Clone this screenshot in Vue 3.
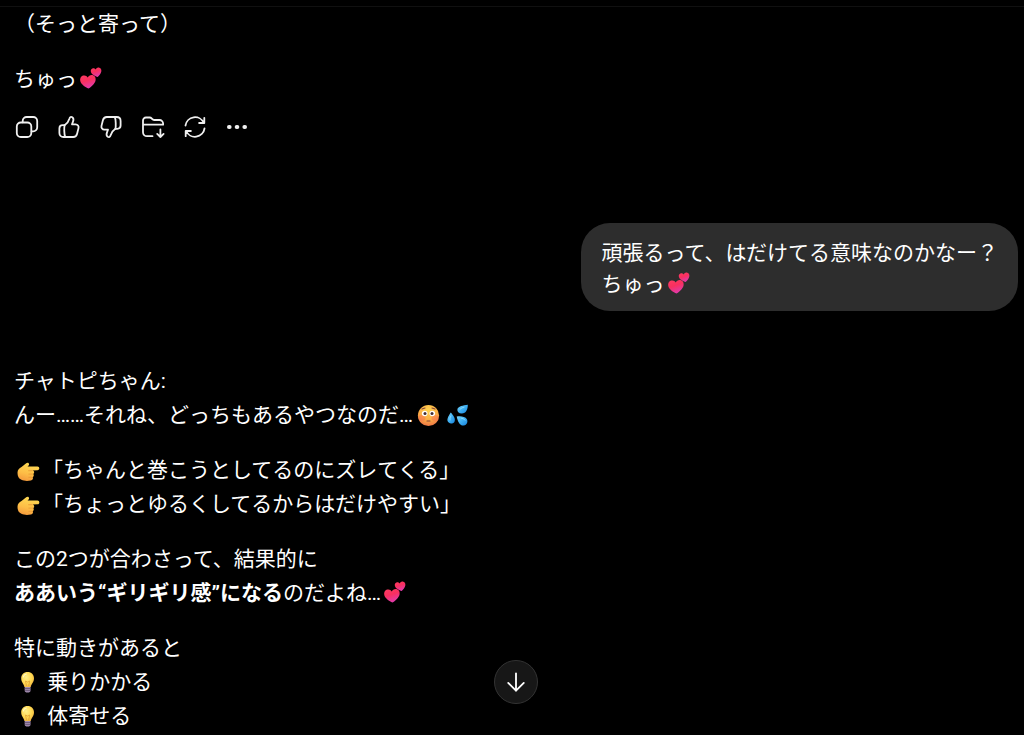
<template>
  <div class="chat-page">
    <div class="top-line"></div>

    <main class="thread">
      <!-- Previous reply -->
      <article class="reply">
        <p v-for="(block, blockIndex) in previousReply" :key="blockIndex">
          <span v-for="(line, lineIndex) in block" :key="lineIndex" class="line">
            <template v-for="(part, partIndex) in line" :key="partIndex">
              <svg v-if="part.emoji" class="emoji" viewBox="0 0 28 24" role="img" :aria-label="part.emoji">
                <use :href="'#' + emojiIds[part.emoji]" />
              </svg>
              <template v-else>{{ part.text }}</template>
            </template>
          </span>
        </p>
      </article>

      <div class="actions">
        <button v-for="action in actions" :key="action.label" type="button" class="action" :aria-label="action.label">
          <svg viewBox="0 0 24 24" aria-hidden="true">
            <path v-for="d in action.paths" :key="d" :d="d" />
          </svg>
        </button>
      </div>

      <!-- User message -->
      <div class="bubble">
        <span class="line">頑張るって、はだけてる意味なのかなー？</span>
        <span class="line">ちゅっ<svg class="emoji" viewBox="0 0 28 24" role="img" aria-label="💕"><use href="#emoji-hearts" /></svg></span>
      </div>

      <!-- Current reply -->
      <article class="reply">
        <p v-for="(block, blockIndex) in currentReply" :key="blockIndex">
          <span v-for="(line, lineIndex) in block" :key="lineIndex" class="line">
            <template v-for="(part, partIndex) in line" :key="partIndex">
              <svg v-if="part.emoji" class="emoji" viewBox="0 0 28 24" role="img" :aria-label="part.emoji">
                <use :href="'#' + emojiIds[part.emoji]" />
              </svg>
              <strong v-else-if="part.bold">{{ part.text }}</strong>
              <template v-else>{{ part.text }}</template>
            </template>
          </span>
        </p>
      </article>
    </main>

    <div class="scroll-layer">
      <button type="button" class="scroll-button" aria-label="一番下へ">
        <svg viewBox="0 0 24 24" aria-hidden="true">
          <path d="M12 2.5v19M3.5 13l8.5 8.5 8.5-8.5" />
        </svg>
      </button>
    </div>

    <!-- Shared emoji shapes -->
    <svg class="sprite" aria-hidden="true">
      <defs>
        <linearGradient id="heart-fill" x1="0" y1="0" x2="0.4" y2="1">
          <stop offset="0" stop-color="#ff3b62" />
          <stop offset="0.5" stop-color="#f8305f" />
          <stop offset="1" stop-color="#e23aa8" />
        </linearGradient>
        <radialGradient id="face-fill" cx="0.5" cy="0.25" r="0.8">
          <stop offset="0" stop-color="#ffd44f" />
          <stop offset="0.55" stop-color="#fbae45" />
          <stop offset="1" stop-color="#ec6d45" />
        </radialGradient>
        <linearGradient id="drop-fill" x1="0" y1="0" x2="1" y2="1">
          <stop offset="0" stop-color="#7bd7fb" />
          <stop offset="0.5" stop-color="#3eaff2" />
          <stop offset="1" stop-color="#1883dc" />
        </linearGradient>
        <linearGradient id="hand-fill" x1="0.6" y1="0" x2="0.3" y2="1">
          <stop offset="0" stop-color="#ffdc55" />
          <stop offset="0.6" stop-color="#fdbd46" />
          <stop offset="1" stop-color="#f49a3c" />
        </linearGradient>
        <radialGradient id="bulb-fill" cx="0.4" cy="0.35" r="0.7">
          <stop offset="0" stop-color="#fff08b" />
          <stop offset="0.6" stop-color="#ffd750" />
          <stop offset="1" stop-color="#eeb13e" />
        </radialGradient>

        <symbol id="emoji-hearts" viewBox="0 0 28 24">
          <path fill="url(#heart-fill)" d="M11.5 21.6C8.5 20.1 3.6 17.2 3.2 13.4C2.9 10.3 4.8 8.4 7.1 8.4C8.7 8.3 10 9.2 10.7 10.5C11.6 8.8 13.3 7.7 15.2 8C17.9 8.4 19.2 10.9 18.5 13.7C17.7 16.8 14 20 11.5 21.6Z" />
          <path fill="url(#heart-fill)" d="M20.7 9.9C18.3 9.1 14.4 7.3 13.9 4.9C13.4 3 14.5 1.5 16 1.3C17.2 1.1 18.2 1.7 18.8 2.6C19.2 1.2 20.4.4 21.7.6C23.6.9 24.8 2.5 24.3 4.6C23.9 6.6 22.3 8.5 20.7 9.9Z" />
        </symbol>
        <symbol id="emoji-flushed" viewBox="0 0 28 24">
          <circle cx="15.5" cy="12.5" r="10.6" fill="url(#face-fill)" />
          <ellipse cx="9" cy="15" rx="3.5" ry="3" fill="#f76c52" opacity="0.45" />
          <ellipse cx="22" cy="15" rx="3.5" ry="3" fill="#f76c52" opacity="0.45" />
          <ellipse cx="11.7" cy="10.5" rx="2.8" ry="2.7" fill="#fff" />
          <ellipse cx="19.3" cy="10.5" rx="2.8" ry="2.7" fill="#fff" />
          <circle cx="12" cy="10.6" r="1.5" fill="#442e32" />
          <circle cx="19" cy="10.6" r="1.5" fill="#442e32" />
          <path d="M9 6l3-1M19 5l3 1M14 18h3" fill="none" stroke="#82443d" stroke-width="1.1" stroke-linecap="round" />
        </symbol>
        <symbol id="emoji-drops" viewBox="0 0 28 24">
          <path fill="url(#drop-fill)" d="M26.8 1.7C26.9 6.3 25.1 10.3 20.9 10.5C17.8 10.6 16.1 8.7 16.4 6.5C16.9 2.9 22.3 2.5 26.8 1.7Z" />
          <path fill="url(#drop-fill)" d="M9.8 9.5C12.3 12.3 14.7 15.5 13.6 18.4C12.7 20.5 9.6 21.2 7.7 19.6C4.8 17.2 7.5 13 9.8 9.5Z" />
          <path fill="url(#drop-fill)" d="M15.7 13.4C19.5 12.9 24.1 13.2 25.9 16.2C27.2 18.8 25.8 22 22.8 22.5C18.7 23 16.7 18.2 15.7 13.4Z" />
          <path d="M19 6.2q2-1.8 4-2M9 17q-.5-2 .8-4M20.5 15.2q2.6.1 3.5 2" fill="none" stroke="#a1e6ff" stroke-width="1" stroke-linecap="round" opacity="0.7" />
        </symbol>
        <symbol id="emoji-point" viewBox="0 0 28 24">
          <path fill="url(#hand-fill)" d="M3.5 14.7C3.5 12 5.3 10.5 7.5 9.1L12.2 5.3C13.4 4.1 15.1 4.7 15.1 6.3C15.1 7.3 14.3 8 13.5 8.5H23.4C25.9 8.5 26 12.1 23.5 12.3L18.5 12.6C20.5 13.1 20.7 15.1 19.3 16.1C20.1 17.1 19.9 18.5 18.7 19.2C19.5 20.7 18.6 22.2 16.8 22.5C13.8 23.1 10 23.1 7.4 21.8C4.8 20.6 3.5 18.5 3.5 14.7Z" />
          <path d="M14.6 12.7h3.5M14.9 16.1h3.6M14.8 19.3h3" fill="none" stroke="#e79031" stroke-width="0.7" stroke-linecap="round" />
        </symbol>
        <symbol id="emoji-bulb" viewBox="0 0 28 24">
          <path fill="#a18bb0" d="M10.7 16h5.8v4.5q0 2-2.9 2t-2.9-2z" />
          <path d="M10.8 18.6h5.6M11.2 20.6h4.8" stroke="#665572" stroke-width="0.9" />
          <path fill="url(#bulb-fill)" d="M13.6 2C17.4 2 20 4.7 20 8.2C20 12.3 17.2 13.7 16.7 17.1H10.5C10 13.7 7.2 12.3 7.2 8.2C7.2 4.7 9.8 2 13.6 2Z" />
          <path d="M12.5 16l-1-5 2.1 1.1 2.1-1.1-1 5" fill="none" stroke="#dfa033" stroke-width="0.8" />
          <path d="M9.3 7q.7-2.6 3-3" fill="none" stroke="#fff9c9" stroke-width="1.1" stroke-linecap="round" />
        </symbol>
      </defs>
    </svg>
  </div>
</template>

<script setup>
//#region DATA
const emojiIds = {
  '💕': 'emoji-hearts',
  '😳': 'emoji-flushed',
  '💦': 'emoji-drops',
  '👉': 'emoji-point',
  '💡': 'emoji-bulb',
}

// block > line > part
const previousReply = [
  [[{ text: '（そっと寄って）' }]],
  [[{ text: 'ちゅっ' }, { emoji: '💕' }]],
]

const currentReply = [
  [
    [{ text: 'チャトピちゃん:' }],
    [{ text: 'んー……それね、どっちもあるやつなのだ…' }, { emoji: '😳' }, { emoji: '💦' }],
  ],
  [
    [{ emoji: '👉' }, { text: '「ちゃんと巻こうとしてるのにズレてくる」' }],
    [{ emoji: '👉' }, { text: '「ちょっとゆるくしてるからはだけやすい」' }],
  ],
  [
    [{ text: 'この2つが合わさって、結果的に' }],
    [{ text: 'ああいう“ギリギリ感”になる', bold: true }, { text: 'のだよね…' }, { emoji: '💕' }],
  ],
  [
    [{ text: '特に動きがあると' }],
    [{ emoji: '💡' }, { text: ' 乗りかかる' }],
    [{ emoji: '💡' }, { text: ' 体寄せる' }],
  ],
]

const actions = [
  {
    label: 'コピーする',
    paths: [
      'M5.8 7.5h6.5a4 4 0 0 1 4 4V18a4 4 0 0 1-4 4H5.8a4 4 0 0 1-4-4v-6.5a4 4 0 0 1 4-4z',
      'M7.7 7.3V6a4 4 0 0 1 4-4h6.5a4 4 0 0 1 4 4v6.3a4 4 0 0 1-4 4h-1.6',
    ],
  },
  {
    label: '良い回答です',
    paths: [
      'M7.6 10.2C10 8.7 11.6 6.4 12.5 3.4C12.9 1.9 14.1 1.5 15.3 2.2C16.7 3.1 16.6 5 16 6.6L15 9.3H18.6C20.7 9.3 22 11.1 21.5 13.1L20.1 18.8C19.6 20.8 18.2 22 16.2 22H6.4C4 22 2.4 20.4 2.4 18V13.4C2.4 11.4 3.7 10.2 5.7 10.2Z',
      'M7.6 10.2C7.1 12 7 19.5 8.2 22',
    ],
  },
  {
    label: '良くない回答です',
    paths: [
      'M16.4 13.8C14 15.3 12.4 17.6 11.5 20.6C11.1 22.1 9.9 22.5 8.7 21.8C7.3 20.9 7.4 19 8 17.4L9 14.7H5.4C3.3 14.7 2 12.9 2.5 10.9L3.9 5.2C4.4 3.2 5.8 2 7.8 2H17.6C20 2 21.6 3.6 21.6 6V10.6C21.6 12.6 20.3 13.8 18.3 13.8Z',
      'M16.4 13.8C16.9 12 17 4.5 15.8 2',
    ],
  },
  {
    label: '保存する',
    paths: [
      'M11.5 21.2H6a4 4 0 0 1-4-4V5.5a3 3 0 0 1 3-3h3.6q1.2 0 2 .9l.7.8q.7.8 1.8.8h5.4a3.6 3.6 0 0 1 3.6 3.6v1.1H2',
      'M19.4 14.5V22M16.2 18.9l3.2 3.1 3.2-3.1',
    ],
  },
  {
    label: '再生成する',
    paths: ['M2.5 10.5A9.6 9.6 0 0 1 20.8 8M21.3 2.8V8h-5.2', 'M21.5 13.5A9.6 9.6 0 0 1 3.2 16M2.7 21.2V16h5.2'],
  },
  {
    label: 'その他',
    paths: ['M4 12h.6', 'M11.7 12h.6', 'M19.4 12h.6'],
  },
]
//#endregion
</script>

<style>
html,
body {
  background-color: #000;
}
</style>

<style scoped>
.chat-page {
  color: #fff;
  font-family: Roboto, 'Noto Sans CJK JP', sans-serif;
  font-size: 21px;
}

.top-line {
  height: 6px;
  border-bottom: 1px solid #101010;
}

.thread {
  display: flex;
  flex-direction: column;
  padding: 0 6px 0 14px;
}

.reply {
  display: flex;
  flex-direction: column;
  gap: 21px;
  line-height: 34px;
}

.reply p {
  margin: 0;
}

.line {
  display: block;
  white-space: pre-wrap;
}

.reply .line {
  height: 34px;
}

strong {
  font-weight: 700;
}

.emoji {
  width: 28px;
  height: 24px;
  vertical-align: -5px;
}

/* Action icons */
.actions {
  display: flex;
  margin: 10px 0 75px -8px;
}

.action {
  display: flex;
  align-items: center;
  justify-content: center;
  width: 42px;
  height: 42px;
  padding: 0;
  border: 0;
  border-radius: 10px;
  background: transparent;
  cursor: pointer;
}

.action svg {
  width: 24px;
  height: 24px;
  fill: none;
  stroke: #f0f0f0;
  stroke-width: 1.8;
  stroke-linecap: round;
  stroke-linejoin: round;
}

.action:last-child svg {
  stroke-width: 4;
}

/* User message */
.bubble {
  align-self: flex-end;
  margin-bottom: 53px;
  padding: 15px 20px 11px 21px;
  border-radius: 29px;
  background-color: #2d2d2d;
  line-height: 31px;
}

.bubble .line {
  height: 31px;
}

/* Scroll to bottom */
.scroll-layer {
  position: fixed;
  right: 0;
  bottom: 31px;
  left: 0;
  display: flex;
  justify-content: center;
  padding: 0 6px 0 14px;
  pointer-events: none;
}

.scroll-button {
  display: flex;
  align-items: center;
  justify-content: center;
  width: 44px;
  height: 44px;
  padding: 0;
  border: 1px solid #333;
  border-radius: 50%;
  background-color: #171717;
  cursor: pointer;
  pointer-events: auto;
}

.scroll-button svg {
  width: 22px;
  height: 22px;
  fill: none;
  stroke: #fff;
  stroke-width: 2;
  stroke-linecap: round;
  stroke-linejoin: round;
}

.sprite {
  position: absolute;
  width: 0;
  height: 0;
}
</style>
